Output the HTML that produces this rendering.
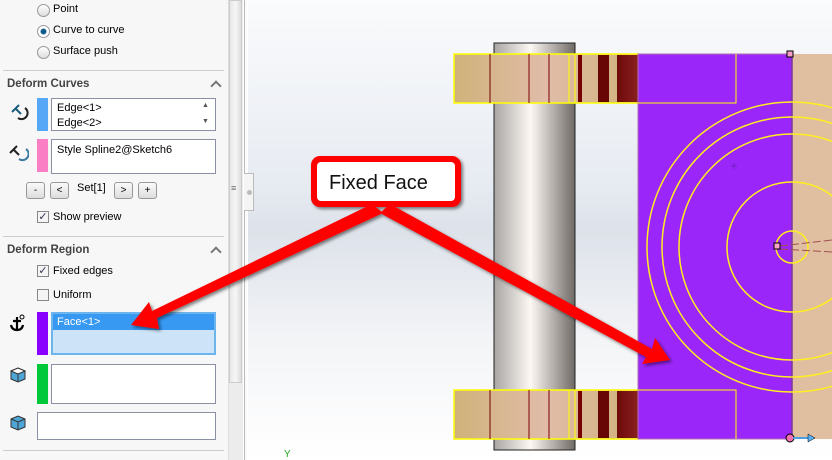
<!DOCTYPE html>
<html><head><style>
*{margin:0;padding:0;box-sizing:border-box}
body{width:832px;height:460px;overflow:hidden;position:relative;font-family:"Liberation Sans",sans-serif;font-size:11px;color:#000;background:#fff}
#panel{position:absolute;left:0;top:0;width:228px;height:460px;background:#f7f7f7}
.t{position:absolute;white-space:nowrap}
.rad{position:absolute;width:13px;height:13px;border-radius:50%;border:1px solid #999;background:linear-gradient(#fff,#ddd)}
.chk{position:absolute;width:12px;height:12px;border:1px solid #888;background:#f4f4f4;font-size:11px;line-height:10px;text-align:center;color:#335}
.hdr{position:absolute;font-weight:bold;color:#444;font-size:11.5px}
.sw{position:absolute;width:11px}
.box{position:absolute;border:1px solid #8a8fa3;background:#fff}
.btn{position:absolute;width:19px;height:17px;border:1px solid #999;border-radius:3px;background:linear-gradient(#fafafa,#ddd);font-size:10px;text-align:center;line-height:15px}
.line{position:absolute;left:3px;width:221px;height:1px;background:#ccc}
.caret{position:absolute;width:8px;height:8px;border-left:2px solid #777;border-top:2px solid #777;transform:rotate(45deg)}
</style></head><body>
<div id="panel">
<div class="rad" style="left:37px;top:4px"></div><div class="t" style="left:53px;top:3px">Point</div>
<div class="rad" style="left:37px;top:25px;background:radial-gradient(#0a5b8a 30%,#fff 45%)"></div><div class="t" style="left:53px;top:24px">Curve to curve</div>
<div class="rad" style="left:37px;top:46px"></div><div class="t" style="left:53px;top:45px">Surface push</div>
<div class="line" style="top:70px"></div>
<div class="hdr" style="left:7px;top:78px">Deform Curves</div><div class="caret" style="left:212px;top:82px"></div>
<svg style="position:absolute;left:9px;top:100px" width="20" height="22"><path d="M3 12 L10 5 M7 9 l5 5" stroke="#1a5d7a" stroke-width="2" fill="none"/><path d="M16 8 a6 6 0 0 1 -7 10" stroke="#222" stroke-width="2" fill="none"/></svg>
<div class="sw" style="left:37px;top:98px;height:33px;background:#56a8f7"></div>
<div class="box" style="left:51px;top:98px;width:165px;height:33px"><div class="t" style="left:5px;top:3px">Edge&lt;1&gt;</div><div class="t" style="left:5px;top:18px">Edge&lt;2&gt;</div><div class="t" style="left:150px;top:3px;font-size:7px;color:#555">▲</div><div class="t" style="left:150px;top:19px;font-size:7px;color:#555">▼</div></div>
<svg style="position:absolute;left:9px;top:141px" width="20" height="22"><path d="M1 12 L8 5 M5 9 l5 5" stroke="#222" stroke-width="2" fill="none"/><path d="M17 8 a6 6 0 0 1 -7 10" stroke="#3a7aa0" stroke-width="2" fill="none"/></svg>
<div class="sw" style="left:37px;top:139px;height:33px;background:#f97ec4"></div>
<div class="box" style="left:51px;top:139px;width:165px;height:35px"><div class="t" style="left:5px;top:4px">Style Spline2@Sketch6</div></div>
<div class="btn" style="left:26px;top:182px">-</div><div class="btn" style="left:50px;top:182px">&lt;</div>
<div class="t" style="left:77px;top:182px">Set[1]</div>
<div class="btn" style="left:114px;top:182px">&gt;</div><div class="btn" style="left:138px;top:182px">+</div>
<div class="chk" style="left:37px;top:211px">✓</div><div class="t" style="left:53px;top:211px">Show preview</div>
<div class="line" style="top:236px"></div>
<div class="hdr" style="left:7px;top:244px">Deform Region</div><div class="caret" style="left:212px;top:248px"></div>
<div class="chk" style="left:37px;top:265px">✓</div><div class="t" style="left:53px;top:265px">Fixed edges</div>
<div class="chk" style="left:37px;top:289px"></div><div class="t" style="left:53px;top:289px">Uniform</div>
<svg style="position:absolute;left:8px;top:313px" width="20" height="20"><path d="M9 4 V17 M5 8 H13 M3 12 Q4 17 9 17 Q14 17 15 12" stroke="#000" stroke-width="2.2" fill="none"/><circle cx="14" cy="4" r="2" stroke="#000" fill="none"/></svg>
<div class="sw" style="left:37px;top:312px;height:43px;background:#8a00ff"></div>
<div class="box" style="left:51px;top:312px;width:165px;height:43px;background:#cde4f8;border:2px solid #6cb4ec"><div style="position:absolute;left:0;top:0;width:161px;height:16px;background:#3899f3"></div><div class="t" style="left:4px;top:2px;color:#fff">Face&lt;1&gt;</div></div>
<svg style="position:absolute;left:9px;top:366px" width="18" height="18"><path d="M2 5 L9 2 L16 5 L16 13 L9 16 L2 13Z" fill="#4fa6d6" stroke="#333"/><path d="M2 5 L9 8 L16 5 M9 8 V16" stroke="#333" fill="none"/><path d="M2 5 L9 2 L16 5 L9 8Z" fill="#fff" stroke="#333"/></svg>
<div class="sw" style="left:37px;top:364px;height:40px;background:#00c83a"></div>
<div class="box" style="left:51px;top:364px;width:165px;height:40px"></div>
<svg style="position:absolute;left:9px;top:414px" width="18" height="18"><path d="M2 5 L9 2 L16 5 L16 13 L9 16 L2 13Z" fill="#4fa6d6" stroke="#333"/><path d="M2 5 L9 8 L16 5 M9 8 V16" stroke="#333" fill="none"/></svg>
<div class="box" style="left:37px;top:412px;width:179px;height:28px"></div>
<div class="line" style="top:450px"></div>
</div>
<div style="position:absolute;left:228px;top:0;width:15px;height:460px;background:#ececec;border-left:1px solid #ddd"></div>
<div style="position:absolute;left:229px;top:0;width:13px;height:383px;background:linear-gradient(90deg,#e8e8e8,#f6f6f6,#ddd);border:1px solid #ccc"></div>
<div style="position:absolute;left:244px;top:0;width:3px;height:460px;background:#fafafa;border-left:1px solid #bbb"></div>
<div style="position:absolute;left:248px;top:0;width:584px;height:460px;background:linear-gradient(#fafbfc 0%,#e7ebf2 40%,#dde2ea 50%,#f4f5f7 75%,#fff 100%)"></div>
<div style="position:absolute;left:244px;top:173px;width:10px;height:38px;background:#f4f4f4;border:1px solid #bbb;border-left:none"></div>
<div class="t" style="left:231px;top:183px;font-size:9px;color:#666">≡</div>
<div style="position:absolute;left:247px;top:190px;width:5px;height:5px;border-radius:50%;background:#bbb"></div>
<svg width="832" height="460" style="position:absolute;left:0;top:0">
<defs>
<linearGradient id="cyl" x1="0" x2="1"><stop offset="0" stop-color="#a8a5a2"/><stop offset=".45" stop-color="#fdf8f4"/><stop offset="1" stop-color="#6f6a66"/></linearGradient>
<linearGradient id="band" x1="0" x2="1"><stop offset="0" stop-color="#cfb27a"/><stop offset=".5" stop-color="#e0bca8"/><stop offset="1" stop-color="#cfb27a"/></linearGradient>
<linearGradient id="dr" x1="0" x2="1"><stop offset="0" stop-color="#6e0a0a"/><stop offset="1" stop-color="#8a2020"/></linearGradient>
<clipPath id="cp"><rect x="638" y="54" width="194" height="385"/></clipPath>
<filter id="sh"><feDropShadow dx="2" dy="2" stdDeviation="1.5" flood-opacity=".5"/></filter>
</defs>
<rect x="494" y="43" width="81" height="407" fill="url(#cyl)" stroke="#222"/>
<g id="b">
<rect x="454" y="54" width="184" height="49" fill="url(#band)" stroke="#ff0" stroke-width="1.5"/>
<path d="M490 54V103M529 54V103M549 54V103" stroke="#700"/>
<path d="M569 54V103M575 54V103" stroke="#ff0"/>
<rect x="578" y="55" width="4" height="47" fill="#700"/>
<rect x="598" y="55" width="11" height="47" fill="#680505"/>
<rect x="617" y="55" width="21" height="47" fill="url(#dr)"/>
</g>
<use href="#b" y="336"/>
<rect x="638" y="54" width="154" height="385" fill="#9b26f9" stroke="#b070b0"/>
<rect x="792" y="54" width="40" height="385" fill="#e0bea0"/>
<line x1="792" y1="54" x2="792" y2="439" stroke="#7a3a9a" stroke-width="1.5"/>
<g clip-path="url(#cp)" fill="none" stroke="#ffef20" stroke-width="1.5">
<circle cx="792" cy="247" r="145"/><circle cx="792" cy="247" r="130"/><circle cx="792" cy="247" r="113"/><circle cx="792" cy="247" r="65"/><circle cx="792" cy="247" r="16"/>
</g>
<path d="M638 103H736V54M638 390H736V439" stroke="#ff0" fill="none"/>
<path d="M734 163v6M731 166h6" stroke="#7020c0"/>
<path d="M780 246 L832 240 M780 249 L832 252" stroke="#a05050" stroke-dasharray="8 3"/>
<rect x="774" y="243" width="6" height="6" fill="#f8a0c8" stroke="#000"/>
<rect x="787" y="51" width="6" height="6" fill="#f8a0c8" stroke="#000"/>
<circle cx="790" cy="438" r="4" fill="#f070b0" stroke="#000"/>
<path d="M793 438H812" stroke="#4aa0e0" stroke-width="2"/><path d="M808 434L815 438L808 442Z" fill="#5ab0f0" stroke="#000" stroke-width=".5"/>
<g filter="url(#sh)" fill="#f00">
<path d="M372 204 L383 213 L157 318 L159 329 L131 325 L149 302 L152 311Z"/>
<path d="M390 204 L380 213 L646 357 L642 364 L670 360 L655 338 L652 349Z"/>
<rect x="311" y="156" width="150" height="51" rx="9"/>
</g>
<rect x="317" y="162" width="138" height="39" rx="4" fill="#fff"/>
<text x="329" y="189" font-family="Liberation Sans,sans-serif" font-size="20" fill="#111">Fixed Face</text>
<text x="284" y="457" font-family="Liberation Sans,sans-serif" font-size="10" fill="#2a2">Y</text>
</svg>
</body></html>
